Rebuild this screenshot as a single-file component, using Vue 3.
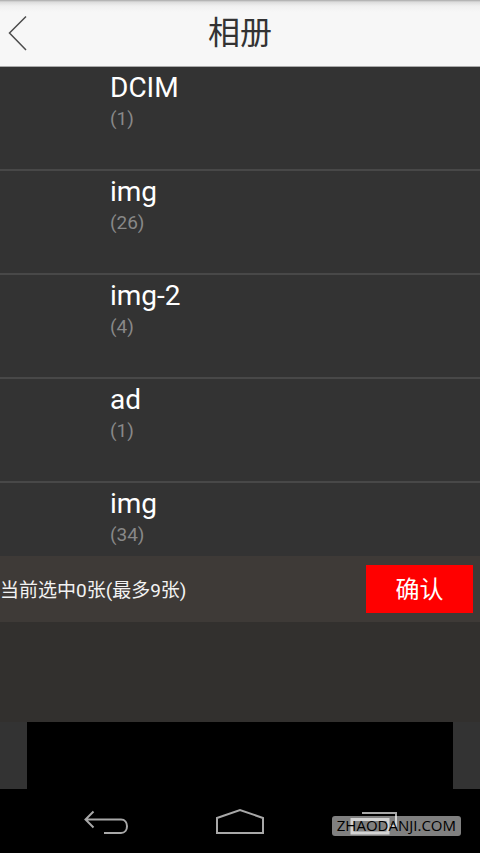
<script setup>
import { ref } from 'vue'

const albums = ref([
  { id: 1, name: 'DCIM', count: 1 },
  { id: 2, name: 'img', count: 26 },
  { id: 3, name: 'img-2', count: 4 },
  { id: 4, name: 'ad', count: 1 },
  { id: 5, name: 'img', count: 34 },
])
const selected = ref(0)
const limit = 9
</script>

<template>
  <div class="screen">
    <header class="header">
      <button class="back" type="button" aria-label="返回">
        <svg width="20" height="36" viewBox="0 0 20 36" fill="none" stroke="#4c4c4c" stroke-width="1.5">
          <path d="M18 1.5L1.5 18L18 35" />
        </svg>
      </button>
      <h1 class="title">相册</h1>
    </header>

    <ul class="albums">
      <li v-for="album in albums" :key="album.id" class="album">
        <span class="name">{{ album.name }}</span>
        <span class="count">({{ album.count }})</span>
      </li>
    </ul>

    <section class="bar">
      <p class="status">当前选中{{ selected }}张(最多{{ limit }}张)</p>
      <button class="confirm" type="button">确认</button>
    </section>
    <div class="tray"></div>
    <div class="preview"><div class="preview-inner"></div></div>

    <nav class="nav">
      <button class="key" type="button" aria-label="后退">
        <svg width="48" height="30" viewBox="0 0 48 30" fill="none" stroke="#a8a8a8" stroke-width="2">
          <path d="M10.500 3.500L2.500 11.500L10.500 19.500M3 11.500H38C46 11.500 46 25 38 25H21" />
        </svg>
      </button>
      <button class="key" type="button" aria-label="主页">
        <svg width="50" height="30" viewBox="0 0 50 30" fill="none" stroke="#a8a8a8" stroke-width="2">
          <path d="M2 10L25 2L48 10V25H2Z" />
        </svg>
      </button>
      <button class="key" type="button" aria-label="最近任务">
        <svg width="50" height="30" viewBox="0 0 50 30" fill="none" stroke="#a8a8a8" stroke-width="2">
          <path d="M13 5H47V18H41" />
          <path d="M3 11.500H39V25H3Z" stroke-width="3" />
        </svg>
      </button>
      <span class="mark">ZHAODANJI.COM</span>
    </nav>
  </div>
</template>

<style>
body {
  background: #000;
}
</style>

<style scoped>
.screen {
  display: flex;
  flex-direction: column;
  height: 100vh;
  overflow: hidden;
  background: #333;
  font-family: Roboto, "Noto Sans CJK SC", sans-serif;
}

button {
  border: 0;
  padding: 0;
  background: none;
  font-family: inherit;
}

svg {
  display: block;
}

.header {
  flex: none;
  display: grid;
  grid-template-columns: 40px 1fr 40px;
  align-items: center;
  height: 67px;
  box-sizing: border-box;
  border-bottom: 1px solid #aaa;
  background: linear-gradient(#a8a8a8, #dcdcdc 2px, #f0f0f0 6px, #f7f7f7 12px);
}

.back {
  padding-left: 8px;
}

.title {
  margin: 0;
  text-align: center;
  font-size: 32px;
  line-height: 48px;
  font-weight: 400;
  color: #333;
}

.albums {
  flex: 1;
  min-height: 0;
  overflow: hidden;
  margin: 0;
  padding: 0;
  list-style: none;
}

.album {
  display: flex;
  flex-direction: column;
  height: 104px;
  box-sizing: border-box;
  padding: 4px 0 0 110px;
  border-bottom: 2px solid #484848;
}

.name {
  font-size: 28px;
  line-height: 34px;
  color: #fff;
}

.count {
  font-size: 19px;
  line-height: 28px;
  color: #888;
}

.bar {
  flex: none;
  display: flex;
  align-items: center;
  justify-content: space-between;
  height: 66px;
  padding-right: 7px;
  background: #3e3a37;
}

.status {
  margin: 0;
  padding-top: 4px;
  font-size: 19px;
  line-height: 28px;
  color: #f2f2f2;
}

.confirm {
  width: 107px;
  height: 48px;
  padding-top: 2px;
  background: #f00;
  color: #fff;
  font-size: 24px;
  line-height: 36px;
}

.tray {
  flex: none;
  height: 100px;
  background: #32302e;
}

.preview {
  flex: none;
  display: flex;
  height: 67px;
  padding: 0 27px;
  background: #333;
}

.preview-inner {
  flex: 1;
  background: #000;
}

.nav {
  flex: none;
  position: relative;
  display: flex;
  align-items: center;
  justify-content: center;
  gap: 84px;
  height: 64px;
  box-sizing: border-box;
  padding: 4px 0 0 2px;
  background: #000;
}

.mark {
  position: absolute;
  right: 19px;
  bottom: 17px;
  padding: 0 5px 2px;
  border-radius: 3px;
  background: rgba(255, 255, 255, 0.5);
  color: #000;
  font-family: "Open Sans", sans-serif;
  font-size: 15px;
  line-height: 18px;
}
</style>
